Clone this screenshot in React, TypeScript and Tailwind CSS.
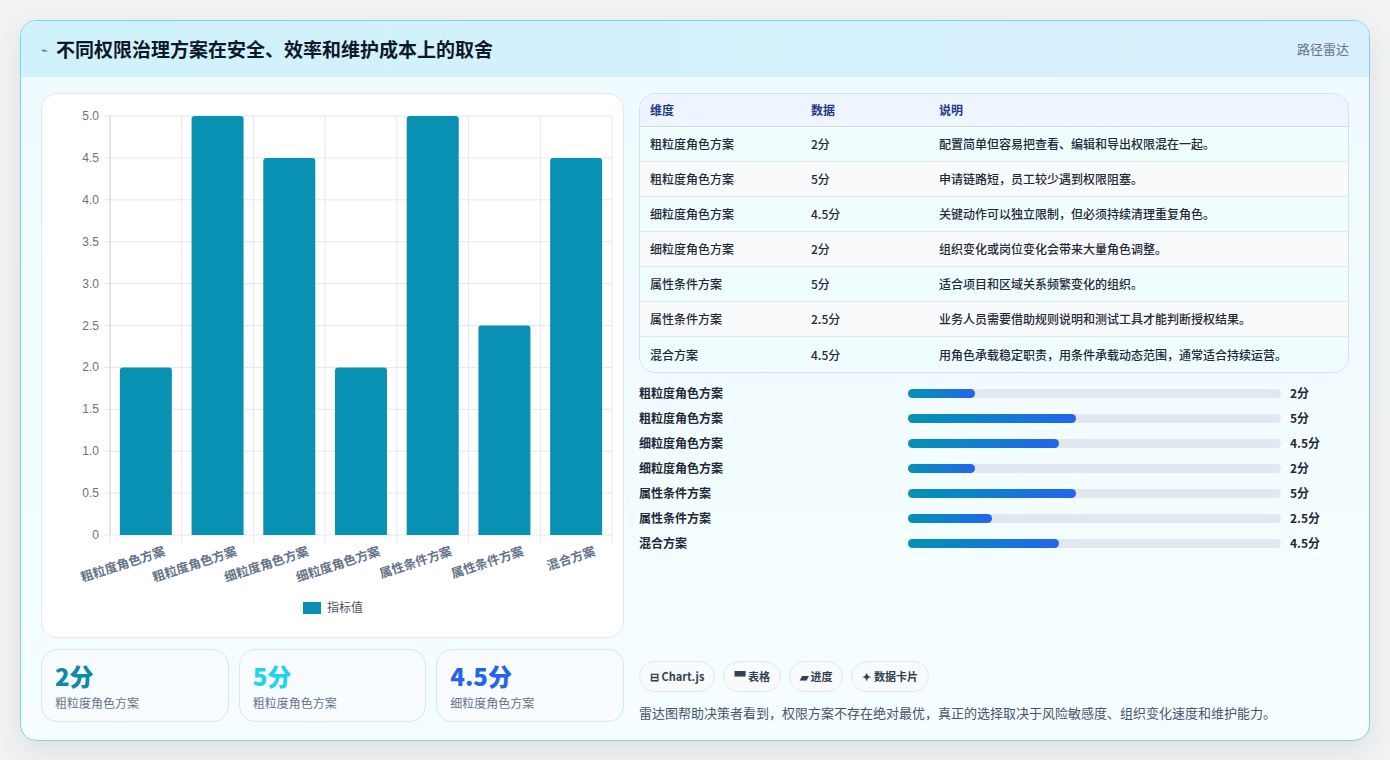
import React from 'react';

const ROWS = [
  { name: '粗粒度角色方案', v: 2, note: '配置简单但容易把查看、编辑和导出权限混在一起。' },
  { name: '粗粒度角色方案', v: 5, note: '申请链路短，员工较少遇到权限阻塞。' },
  { name: '细粒度角色方案', v: 4.5, note: '关键动作可以独立限制，但必须持续清理重复角色。' },
  { name: '细粒度角色方案', v: 2, note: '组织变化或岗位变化会带来大量角色调整。' },
  { name: '属性条件方案', v: 5, note: '适合项目和区域关系频繁变化的组织。' },
  { name: '属性条件方案', v: 2.5, note: '业务人员需要借助规则说明和测试工具才能判断授权结果。' },
  { name: '混合方案', v: 4.5, note: '用角色承载稳定职责，用条件承载动态范围，通常适合持续运营。' },
];

const FONT = { fontFamily: '"Noto Sans CJK SC", "Liberation Sans", sans-serif' };

function Chart() {
  // plot area inside svg: x 68..570, y 22..441 (card-relative)
  const x0 = 68, x1 = 570, y0 = 22, y1 = 441;
  const slot = (x1 - x0) / 7;
  const unit = (y1 - y0) / 5;
  const ticks = [0, 0.5, 1, 1.5, 2, 2.5, 3, 3.5, 4, 4.5, 5];
  return (
    <svg width="582" height="543" className="block">
      {ticks.map((t) => {
        const y = y1 - t * unit;
        return (
          <g key={t}>
            <line x1={x0 - 6} x2={x1} y1={y} y2={y} stroke="#e5e7eb" />
            <text x={x0 - 11} y={y + 4} textAnchor="end" fontSize="12" fill="#6b7280" fontFamily="Liberation Sans, sans-serif">
              {t === 0 ? '0' : t.toFixed(1)}
            </text>
          </g>
        );
      })}
      {Array.from({ length: 8 }).map((_, i) => (
        <line key={i} x1={x0 + i * slot} x2={x0 + i * slot} y1={y0} y2={y1 + 8} stroke="#e5e7eb" />
      ))}
      <line x1={x0} x2={x0} y1={y0} y2={y1} stroke="#d1d5db" />
      {ROWS.map((r, i) => {
        const bx = x0 + i * slot + (slot - 52) / 2;
        const h = r.v * unit;
        return (
          <g key={i}>
            <path
              d={`M${bx} ${y1} V${y1 - h + 3} Q${bx} ${y1 - h} ${bx + 3} ${y1 - h} H${bx + 49} Q${bx + 52} ${y1 - h} ${bx + 52} ${y1 - h + 3} V${y1}Z`}
              fill="#0891b2"
            />
            <text
              x={x0 + i * slot + slot / 2 + 20}
              y={y1 + 20}
              textAnchor="end"
              fontSize="12.5"
              fontWeight="600"
              fill="#64748b"
              transform={`rotate(-18 ${x0 + i * slot + slot / 2 + 20} ${y1 + 20})`}
              style={FONT}
            >
              {r.name}
            </text>
          </g>
        );
      })}
      <rect x="261" y="508" width="18" height="12" fill="#0891b2" />
      <text x="285" y="518" fontSize="12" fill="#4b5563" style={FONT}>指标值</text>
    </svg>
  );
}

export default function App() {
  return (
    <div className="min-h-screen bg-[#f1f2f4] p-5 pb-5" style={FONT}>
      <div className="overflow-hidden rounded-2xl border border-[#7dd3e0] bg-gradient-to-b from-[#effbff] to-[#f5fdff] shadow-[0_10px_30px_rgba(0,0,0,0.08)]">
        <div className="flex h-14 items-center justify-between bg-gradient-to-r from-[#cff2fb] to-[#d8f0fd] px-5">
          <div className="flex items-center gap-2">
            <span className="text-[11px] text-[#2563eb]">⌁</span>
            <h1 className="text-[19px] font-bold text-[#0f172a]">不同权限治理方案在安全、效率和维护成本上的取舍</h1>
          </div>
          <span className="text-[13px] text-[#64748b]">路径雷达</span>
        </div>
        <div className="flex gap-[15px] px-5 pb-[18px] pt-4">
          <div className="flex w-[583px] flex-col gap-[11px]">
            <div className="rounded-2xl border border-[#e2e8f0] bg-white">
              <Chart />
            </div>
            <div className="grid grid-cols-3 gap-[10px]">
              {[
                { v: '2分', c: 'text-[#0e8aa8]', n: '粗粒度角色方案' },
                { v: '5分', c: 'text-[#22d3ee]', n: '粗粒度角色方案' },
                { v: '4.5分', c: 'text-[#2563eb]', n: '细粒度角色方案' },
              ].map((s, i) => (
                <div key={i} className="h-[73px] rounded-2xl border border-[#dbe5f3] bg-[#f8fbff] px-[13px] pt-[10px]">
                  <div className={`text-[24px] font-extrabold leading-8 ${s.c}`}>{s.v}</div>
                  <div className="mt-[2px] text-[12px] text-[#64748b]">{s.n}</div>
                </div>
              ))}
            </div>
          </div>
          <div className="flex flex-1 flex-col">
            <div className="overflow-hidden rounded-2xl border border-[#d6dee8] bg-white text-[12px]">
              <div className="flex h-[33px] items-center border-b border-[#d6dee8] bg-[#eef5ff] font-semibold text-[#1e3a8a]">
                <div className="w-[171px] pl-[10px]">维度</div>
                <div className="w-[128px]">数据</div>
                <div>说明</div>
              </div>
              {ROWS.map((r, i) => (
                <div
                  key={i}
                  className={`flex h-[35px] items-center font-medium text-[#1f2937] ${i < ROWS.length - 1 ? 'border-b border-[#e5e7eb]' : ''} ${i % 2 === 0 ? 'bg-[#f0fdff]' : 'bg-[#f9fafb]'}`}
                >
                  <div className="w-[171px] pl-[10px]">{r.name}</div>
                  <div className="w-[128px]">{r.v}分</div>
                  <div>{r.note}</div>
                </div>
              ))}
            </div>
            <div className="mt-[11px] flex flex-col gap-[7px]">
              {ROWS.map((r, i) => (
                <div key={i} className="flex h-[18px] items-center text-[12px] font-semibold text-[#1f2937]">
                  <div className="w-[269px]">{r.name}</div>
                  <div className="h-[9px] w-[373px] rounded-full bg-[#e2e8f0]">
                    <div className="h-full rounded-full bg-gradient-to-r from-[#0891b2] to-[#2563eb]" style={{ width: `${r.v * 9}%` }} />
                  </div>
                  <div className="ml-[9px] font-bold">{r.v}分</div>
                </div>
              ))}
            </div>
            <div className="mt-auto">
              <div className="flex gap-[8px]">
                {['⊟ Chart.js', '▀ 表格', '▰ 进度', '✦ 数据卡片'].map((c) => (
                  <span key={c} className="rounded-full border border-[#e2e8f0] bg-[#f8fafc] px-[10px] py-[6px] text-[11px] font-semibold text-[#334155]">
                    {c}
                  </span>
                ))}
              </div>
              <p className="mt-[11px] text-[13px] text-[#475569]">雷达图帮助决策者看到，权限方案不存在绝对最优，真正的选择取决于风险敏感度、组织变化速度和维护能力。</p>
            </div>
          </div>
        </div>
      </div>
    </div>
  );
}
